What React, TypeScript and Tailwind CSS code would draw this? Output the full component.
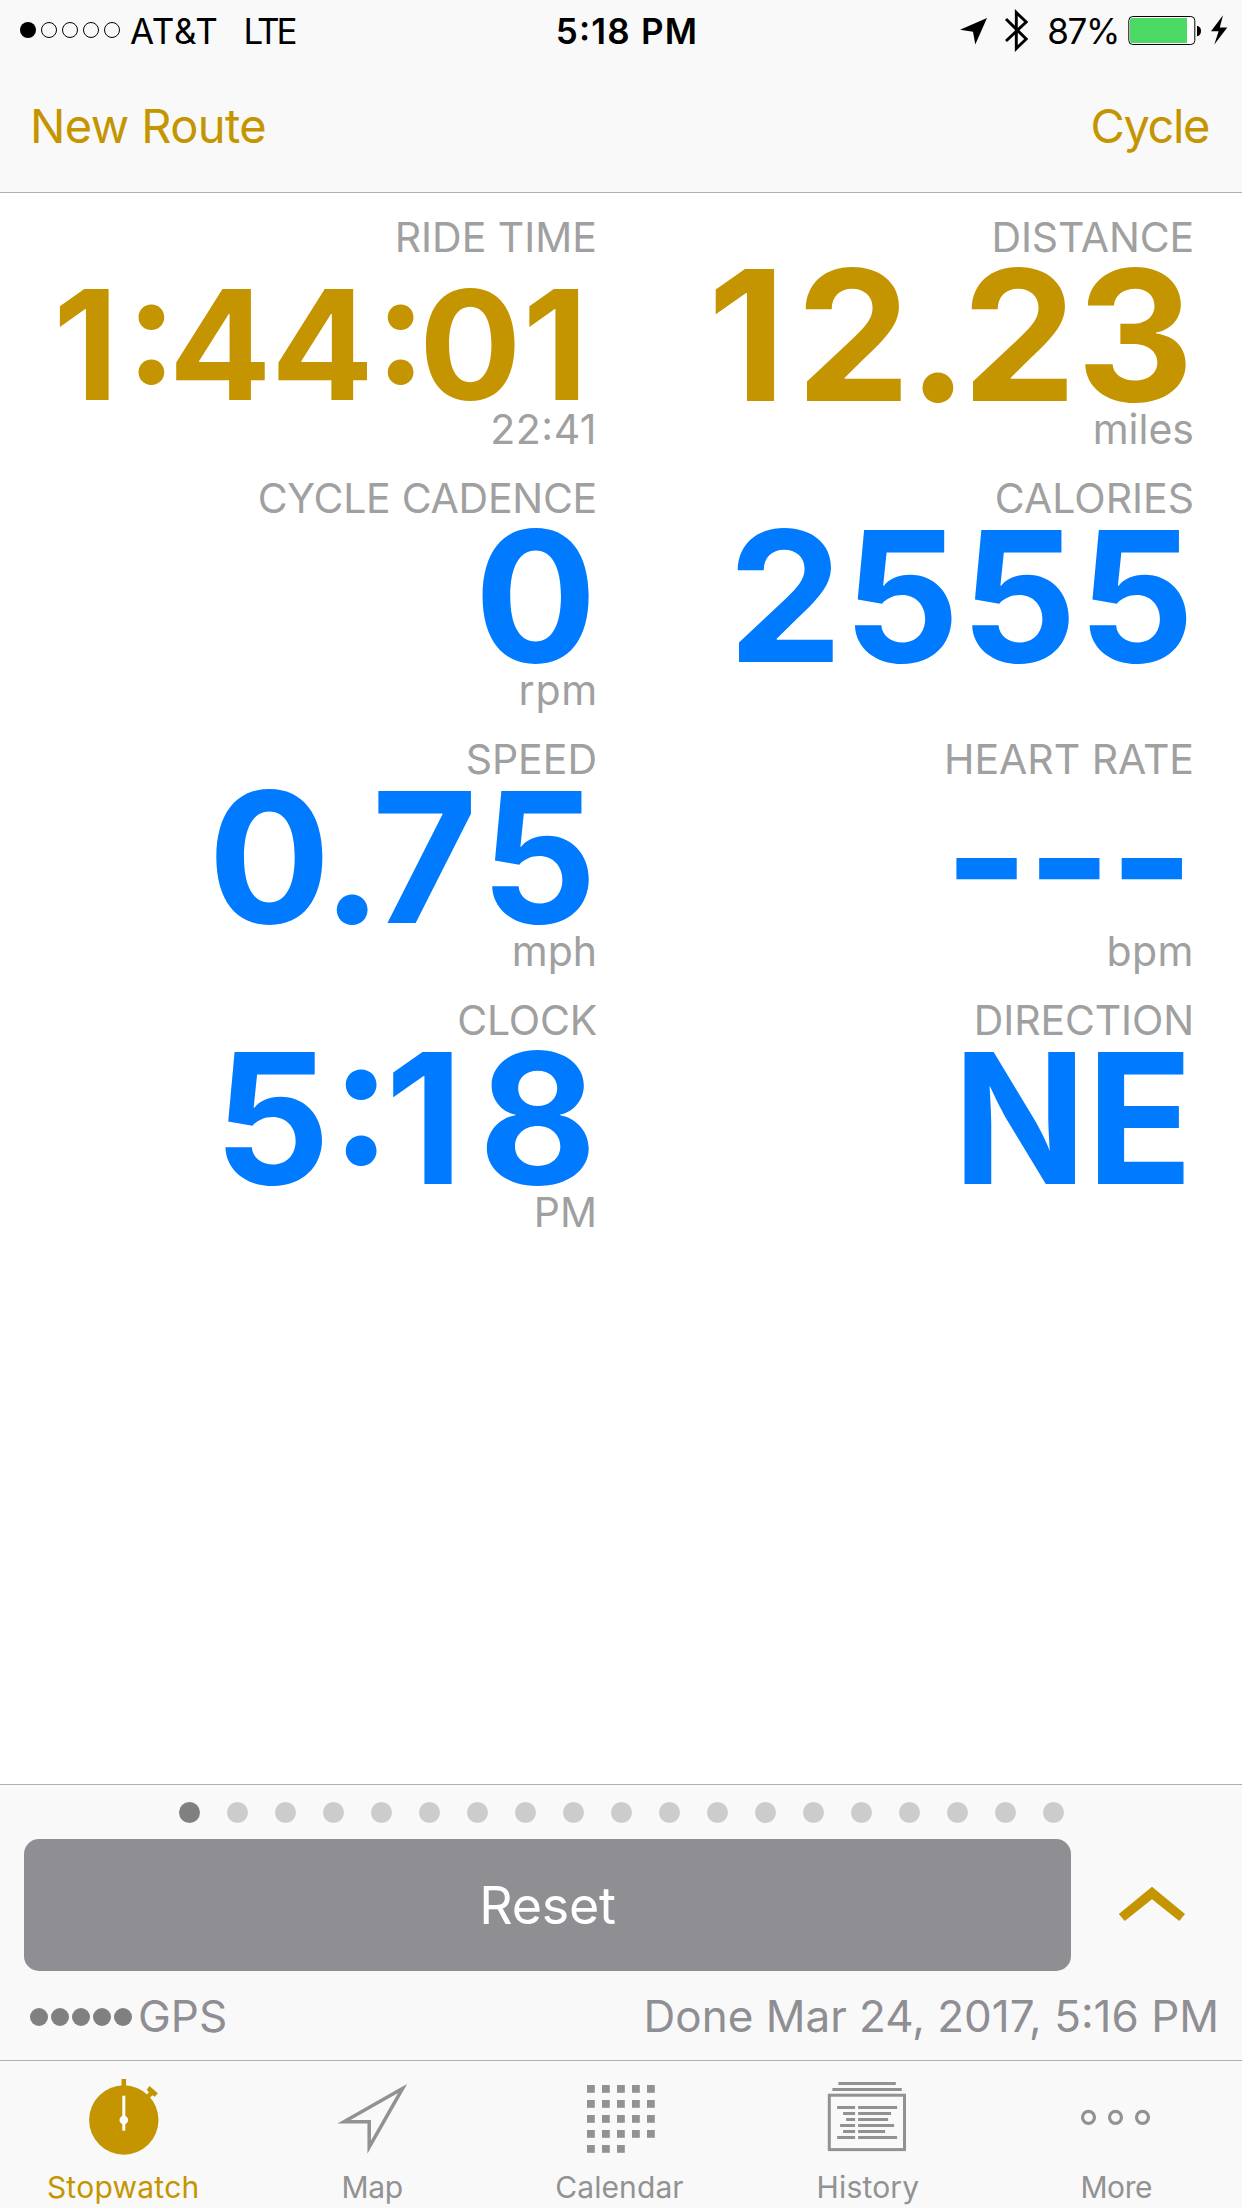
import type { ReactNode } from "react";

type Metric = {
  label: string;
  value: ReactNode;
  unit: string;
  labelClass?: string;
  valueClass: string;
  unitClass?: string;
};

const metrics: Metric[] = [
  {
    label: "RIDE TIME",
    value: (
      <>
        <span className="tracking-[7.5px]">1</span>
        <span className="tracking-[-8px]">:</span>
        <span className="tracking-[-0.6px]">4</span>
        <span className="tracking-[1.5px]">4</span>
        <span className="tracking-[-7px]">:</span>
        <span className="tracking-[1px]">0</span>
        <span>1</span>
      </>
    ),
    unit: "22:41",
    valueClass: "text-[152px] text-[#c49500] pt-[10px] mr-[9px]",
    unitClass: "tracking-[0.5px]",
  },
  {
    label: "DISTANCE",
    value: (
      <>
        <span className="tracking-[10px]">1</span>
        <span className="tracking-[-3px]">2</span>
        <span className="tracking-[-6.5px]">.</span>
        <span>23</span>
      </>
    ),
    unit: "miles",
    labelClass: "tracking-[-0.15px]",
    valueClass: "text-[182px] text-[#c49500]",
  },
  {
    label: "CYCLE CADENCE",
    value: "0",
    unit: "rpm",
    labelClass: "tracking-[-0.27px]",
    valueClass: "text-[182px] text-[#007aff]",
    unitClass: "tracking-[0.8px] -mr-[1px]",
  },
  {
    label: "CALORIES",
    value: "2555",
    unit: "",
    valueClass: "text-[182px] text-[#007aff] tracking-[1px] -mr-[1.5px]",
  },
  {
    label: "SPEED",
    value: (
      <>
        <span className="tracking-[-9px]">0</span>
        <span className="tracking-[-10.6px]">.</span>
        <span className="tracking-[3px]">7</span>
        <span>5</span>
      </>
    ),
    unit: "mph",
    valueClass: "text-[182px] text-[#007aff]",
  },
  {
    label: "HEART RATE",
    value: "---",
    unit: "bpm",
    valueClass: "text-[182px] text-[#007aff] tracking-[-2.5px] mr-[2px]",
    unitClass: "tracking-[0.5px]",
  },
  {
    label: "CLOCK",
    value: (
      <>
        <span className="tracking-[0.5px]">5</span>
        <span className="tracking-[-6.6px]">:</span>
        <span className="tracking-[15px]">1</span>
        <span>8</span>
      </>
    ),
    unit: "PM",
    labelClass: "tracking-[-0.2px]",
    valueClass: "text-[182px] text-[#007aff]",
  },
  {
    label: "DIRECTION",
    value: "NE",
    unit: "",
    labelClass: "tracking-[-0.13px]",
    valueClass: "text-[181px] text-[#007aff] origin-right scale-x-[0.968] mr-[1px]",
  },
];

function MetricCell({ m }: { m: Metric }) {
  const raised = m.value !== "---" ? "[font-feature-settings:'case']" : "";
  return (
    <div className="flex h-[261px] flex-col items-end whitespace-nowrap pt-[21px] text-[41px] text-[#a0a0a0]">
      <div className={`h-[46px] leading-[46px] ${m.labelClass ?? ""}`}>{m.label}</div>
      <div className={`h-[147px] font-bold leading-[151px] ${raised} ${m.valueClass}`}>{m.value}</div>
      <div className={`h-[44px] leading-[44px] [font-feature-settings:'case'] ${m.unitClass ?? ""}`}>
        {m.unit}
      </div>
    </div>
  );
}

function StatusBar() {
  return (
    <div className="grid h-[62px] grid-cols-[1fr_auto_1fr] items-center whitespace-nowrap text-[35px] leading-[62px] text-black">
      <div className="flex items-center pl-5">
        <div className="flex gap-[5px] pb-[2px]">
          <span className="size-4 rounded-full bg-black" />
          {[0, 1, 2, 3].map((i) => (
            <span key={i} className="size-4 rounded-full border border-black" />
          ))}
        </div>
        <span className="ml-[10px] tracking-[0.7px]">AT&amp;T</span>
        <span className="ml-[25px] tracking-[-3px]">LTE</span>
      </div>
      <div className="pl-[12px] font-semibold tracking-[1.2px] [font-feature-settings:'case']">
        5:18 PM
      </div>
      <div className="flex items-center justify-end pr-[13px]">
        <svg className="h-[62px] w-[72px]" viewBox="0 0 72 62">
          <path d="M28 18 16.3 44.5 14 31.8 1 29.7Z" fill="#000" />
          <path
            d="M47 19 67.2 39 57.3 48.5V12.5L67.2 22 47 41"
            fill="none"
            stroke="#000"
            strokeWidth="2.9"
          />
        </svg>
        <span className="ml-[16px] mr-[9px] tracking-[-1.4px]">87%</span>
        <svg className="h-[62px] w-[101px]" viewBox="0 0 101 62">
          <rect x="0.8" y="16.5" width="66" height="28" rx="4" fill="#fff" stroke="#000" />
          <path d="M4 18H59V43H4Q2 43 2 41V20Q2 18 4 18Z" fill="#4cd964" />
          <path d="M69 25.7Q73 26.5 73 31T69 36.3Z" fill="#000" />
          <path d="M95 15.3 83 31.2H90.6L86.3 44.5 99.3 27.6H91.8Z" fill="#000" />
        </svg>
      </div>
    </div>
  );
}

function StopwatchIcon() {
  return (
    <svg className="h-[80px] w-[90px]" viewBox="0 0 90 80">
      <g fill="#c49500">
        <circle cx="44.8" cy="44" r="34.7" />
        <rect x="42.5" y="3" width="4.6" height="9" />
        <path d="M70.5 10 78.8 17.3 75.8 20.8 73.3 19.3 70.3 22.5 67.3 19.5 69.8 16.3 67.8 13.5Z" />
      </g>
      <path d="M44.8 19.7V54.7" stroke="#fff" strokeWidth="3" />
      <circle cx="44.8" cy="44" r="4.3" fill="#fff" />
    </svg>
  );
}

function MapIcon() {
  return (
    <svg className="h-[80px] w-[90px]" viewBox="0 0 90 80">
      <path
        d="M74.5 12.6 16 45.8H41.2V71.2Z"
        fill="none"
        stroke="#929292"
        strokeWidth="3.5"
        strokeMiterlimit="10"
      />
    </svg>
  );
}

const calendarDays = Array.from({ length: 23 }, (_, i) => i);

function CalendarIcon() {
  return (
    <svg className="h-[80px] w-[90px]" viewBox="0 0 90 80" fill="#929292">
      {calendarDays.map((i) => (
        <rect key={i} x={11 + (i % 5) * 15} y={9 + Math.floor(i / 5) * 15} width="7.8" height="7.8" />
      ))}
    </svg>
  );
}

function HistoryIcon() {
  return (
    <svg
      className="h-[80px] w-[90px]"
      viewBox="-0.5 0 90 80"
      fill="none"
      stroke="#929292"
      strokeWidth="3"
    >
      <path d="M13.9 7.4H71.3M7.9 13.4H77.3" />
      <rect x="4.8" y="19.2" width="75.2" height="54.4" />
      <path d="M12.6 31.4H30.6M33.6 31.4H72.6M18.6 37.4H30.6M33.6 37.4H66.6M21.6 43.4H30.6M33.6 43.4H63.6M15.6 49.4H30.6M33.6 49.4H69.6M18.6 55.4H30.6M33.6 55.4H60.6M12.6 61.4H30.6M33.6 61.4H72.6" />
    </svg>
  );
}

function MoreIcon() {
  return (
    <svg
      className="h-[80px] w-[90px]"
      viewBox="0 0 90 80"
      fill="none"
      stroke="#929292"
      strokeWidth="3.2"
    >
      <circle cx="15.5" cy="41.3" r="6" />
      <circle cx="42.5" cy="41.3" r="6" />
      <circle cx="69.5" cy="41.3" r="6" />
    </svg>
  );
}

const tabs: { name: string; icon: ReactNode; labelClass: string }[] = [
  { name: "Stopwatch", icon: <StopwatchIcon />, labelClass: "pr-[2px] text-[#c49500] tracking-[0.25px]" },
  { name: "Map", icon: <MapIcon />, labelClass: "pr-[1px] text-[#929292] tracking-[-0.3px]" },
  { name: "Calendar", icon: <CalendarIcon />, labelClass: "pr-[3px] text-[#929292] tracking-[0.1px]" },
  { name: "History", icon: <HistoryIcon />, labelClass: "pr-[3px] text-[#929292] tracking-[0.2px]" },
  { name: "More", icon: <MoreIcon />, labelClass: "pr-[3px] text-[#929292] tracking-[-0.4px]" },
];

const pages = Array.from({ length: 19 }, (_, i) => i);

export default function App() {
  return (
    <div className="flex h-[2208px] w-[1242px] flex-col overflow-hidden bg-white font-['Inter',sans-serif]">
      <header className="h-[193px] border-b border-[#b0b0b0] bg-[#f9f9f9]">
        <StatusBar />
        <nav className="flex h-[129px] items-center justify-between pl-[30px] pr-[33px] text-[47px] text-[#c49500]">
          <button className="tracking-[-0.6px]">New Route</button>
          <button className="tracking-[-1.4px]">Cycle</button>
        </nav>
      </header>

      <main className="grid flex-1 grid-cols-[597px_597px] content-start">
        {metrics.map((m) => (
          <MetricCell key={m.label} m={m} />
        ))}
      </main>

      <section className="h-[276px] border-t border-[#b0b0b0] bg-[#f9f9f9] pt-[17px]">
        <div className="flex gap-[27px] pl-[179px]">
          {pages.map((i) => (
            <span
              key={i}
              className={`size-[21px] rounded-full ${i === 0 ? "bg-[#808080]" : "bg-[#cccccc]"}`}
            />
          ))}
        </div>
        <div className="mt-4 flex items-center pl-6">
          <button className="h-[132px] w-[1047px] rounded-[15px] bg-[#8e8e93] pt-[2px] text-[52px] tracking-[-0.25px] text-white">
            Reset
          </button>
          <svg className="mb-[2px] ml-[47px] h-[36px] w-[68px]" viewBox="0 0 68 36">
            <path d="M34 0.8 67 28 61.3 35 34 13.2 6.7 35 0.8 28Z" fill="#c49500" />
          </svg>
        </div>
        <div className="flex h-[89px] items-center justify-between whitespace-nowrap pl-[30px] pr-[23px] text-[44px] leading-[60px] text-[#8e8e93]">
          <div className="flex items-center">
            <div className="flex gap-[3px] pt-[2px]">
              {[0, 1, 2, 3, 4].map((i) => (
                <span key={i} className="size-[18px] rounded-full bg-[#808080]" />
              ))}
            </div>
            <span className="ml-[6px]">GPS</span>
          </div>
          <span>Done Mar 24, 2017, 5:16 PM</span>
        </div>
      </section>

      <footer className="grid h-[148px] grid-cols-5 border-t border-[#b0b0b0] bg-[#f9f9f9] pt-[15px]">
        {tabs.map((t) => (
          <div key={t.name} className="flex flex-col items-center">
            {t.icon}
            <span className={`mt-[13px] text-[30px] leading-[36px] ${t.labelClass}`}>{t.name}</span>
          </div>
        ))}
      </footer>
    </div>
  );
}
